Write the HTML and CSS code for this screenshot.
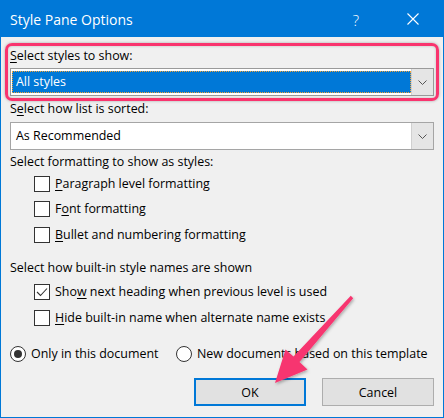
FILE: index.html
```html
<!DOCTYPE html>
<html>
<head>
<meta charset="utf-8">
<link rel="stylesheet" href="styles.css">
</head>
<body>
<div class="window">
  <div class="titlebar">
    <span class="title">Style Pane Options</span>
    <span class="tbtn help">?</span>
    <span class="tbtn close">
      <svg width="12" height="12" viewBox="0 0 12 12"><path d="M0.5 0.5 L11.5 11.5 M11.5 0.5 L0.5 11.5" stroke="#fff" stroke-width="1.1" fill="none"/></svg>
    </span>
  </div>
  <div class="content">
    <div class="lbl l1"><u>S</u>elect styles to show:</div>
    <div class="combo c1">
      <div class="field"><div class="sel">All styles</div></div>
      <div class="dd"><svg width="9" height="5" viewBox="0 0 9 5"><path d="M0.5 0.5 L4.5 4.5 L8.5 0.5" stroke="#555" fill="none"/></svg></div>
    </div>
    <div class="lbl l2">S<u>e</u>lect how list is sorted:</div>
    <div class="combo c2">
      <div class="field plain">As Recommended</div>
      <div class="dd"><svg width="9" height="5" viewBox="0 0 9 5"><path d="M0.5 0.5 L4.5 4.5 L8.5 0.5" stroke="#555" fill="none"/></svg></div>
    </div>
    <div class="lbl l3">Select formatting to show as styles:</div>
    <div class="group g1">
      <div class="cbrow"><span class="box"></span><span class="txt"><u>P</u>aragraph level formatting</span></div>
      <div class="cbrow"><span class="box"></span><span class="txt">F<u>o</u>nt formatting</span></div>
      <div class="cbrow"><span class="box"></span><span class="txt"><u>B</u>ullet and numbering formatting</span></div>
    </div>
    <div class="lbl l4">Select how built-in style names are shown</div>
    <div class="group g2">
      <div class="cbrow"><span class="box"><svg width="14" height="14" viewBox="0 0 14 14"><path d="M2 7 L5.5 10.5 L12 3.5" stroke="#333" stroke-width="1.1" fill="none"/></svg></span><span class="txt">Sho<u>w</u> next heading when previous level is used</span></div>
      <div class="cbrow"><span class="box"></span><span class="txt"><u>H</u>ide built-in name when alternate name exists</span></div>
    </div>
    <div class="radios">
      <div class="ropt first"><span class="radio on"></span><span class="txt">Only in this document</span></div>
      <div class="ropt"><span class="radio"></span><span class="txt">New documents based on this template</span></div>
    </div>
    <div class="buttons">
      <div class="btn default">OK</div>
      <div class="btn">Cancel</div>
    </div>
  </div>
  <div class="highlight"></div>
  <svg class="arrow" width="444" height="418" viewBox="0 0 444 418">
    <defs>
      <filter id="sh" x="-20%" y="-20%" width="140%" height="140%">
        <feDropShadow dx="1" dy="1.5" stdDeviation="1.5" flood-color="#000" flood-opacity="0.3"/>
      </filter>
    </defs>
    <polygon filter="url(#sh)" fill="#F7366F" points="353.2,298.2 299.5,362 307.5,369.5 275,383 285.5,349.5 293.5,356.6 350.8,295.8"/>
  </svg>
</div>
</body>
</html>
```
FILE: styles.css
```css
html, body {
  margin: 0;
  padding: 0;
}
body {
  width: 444px;
  height: 418px;
  overflow: hidden;
  background: #F0F0F0;
}
.window {
  position: relative;
  width: 444px;
  height: 418px;
  display: flex;
  flex-direction: column;
  font-family: "Open Sans", "Noto Sans", sans-serif;
  font-size: 12.45px;
  color: #000;
  background: #F0F0F0;
}
u {
  text-underline-offset: 1.5px;
}
.titlebar {
  height: 37px;
  flex: none;
  background: #0078D7;
  color: #fff;
  display: flex;
  align-items: center;
  padding: 2px 8px 0 10px;
  box-sizing: border-box;
}
.title {
  flex: 1;
  font-size: 14px;
  line-height: 20px;
}
.tbtn {
  width: 46px;
  display: flex;
  justify-content: center;
  align-items: center;
  height: 20px;
}
.help {
  font-size: 15px;
  font-weight: 300;
  margin-right: 11px;
  padding-left: 2px;
}
.close svg {
  display: block;
  margin-top: -1px;
}
.content {
  flex: 1;
  border: 1px solid #0078D7;
  border-top: none;
  padding: 0 9px;
  display: flex;
  flex-direction: column;
}
.lbl {
  line-height: 16px;
  height: 16px;
}
.l1 { margin-top: 11px; }
.l2 { margin-top: 5px; }
.l3 { margin-top: 4px; }
.l4 { margin-top: 12px; }
.combo {
  height: 28px;
  box-sizing: border-box;
  border: 1px solid #A5A5A5;
  background: #fff;
  display: flex;
}
.c1 { margin-top: 4px; border-color: #9A9A9A; }
.c2 { margin-top: 5px; }
.field {
  flex: 1;
  display: flex;
}
.sel {
  flex: 1;
  margin: 2px 0 2px 1px;
  background: #0078D7;
  color: #fff;
  border: 1px dotted #F2A33A;
  line-height: 20px;
  padding-left: 3px;
}
.plain {
  line-height: 26px;
  padding-left: 5px;
}
.dd {
  width: 21px;
  background: #E5E5E5;
  border-left: 1px solid #D0D0D0;
  display: flex;
  align-items: center;
  justify-content: center;
}
.dd svg {
  display: block;
  margin-top: 1px;
}
.group {
  display: flex;
  flex-direction: column;
}
.g1 { margin-top: 1px; }
.g2 { margin-top: 4px; }
.cbrow {
  height: 25.5px;
  display: flex;
  align-items: center;
  padding-left: 24px;
}
.box {
  width: 16px;
  height: 16px;
  box-sizing: border-box;
  border: 1px solid #333;
  background: #fff;
  display: flex;
  align-items: center;
  justify-content: center;
  flex: none;
}
.box svg { display: block; }
.txt {
  line-height: 16px;
  margin-left: 5px;
  white-space: nowrap;
}
.radios {
  margin-top: 15px;
  height: 16px;
  display: flex;
  align-items: center;
}
.ropt {
  display: flex;
  align-items: center;
}
.ropt.first {
  width: 166px;
}
.ropt .txt { margin-left: 5px; }
.radio {
  width: 16px;
  height: 16px;
  box-sizing: border-box;
  border: 1px solid #333;
  border-radius: 50%;
  background: #fff;
  display: flex;
  align-items: center;
  justify-content: center;
  flex: none;
}
.radio.on::after {
  content: "";
  width: 8px;
  height: 8px;
  border-radius: 50%;
  background: #333;
}
.buttons {
  margin-top: 16.5px;
  display: flex;
  justify-content: flex-end;
  gap: 16px;
}
.btn {
  width: 112px;
  height: 28px;
  box-sizing: border-box;
  border: 1px solid #ADADAD;
  background: #E1E1E1;
  display: flex;
  align-items: center;
  justify-content: center;
  line-height: 16px;
  padding-top: 1px;
}
.btn.default {
  border: 2px solid #0078D7;
}
.highlight {
  position: absolute;
  left: 5px;
  top: 43px;
  width: 434px;
  height: 58px;
  box-sizing: border-box;
  border: 3px solid #F9346E;
  border-radius: 7px;
  box-shadow: 0 0 3px rgba(0,0,0,0.3), inset 0 0 3px rgba(0,0,0,0.2);
  pointer-events: none;
}
.arrow {
  position: absolute;
  left: 0;
  top: 0;
  pointer-events: none;
}
```
